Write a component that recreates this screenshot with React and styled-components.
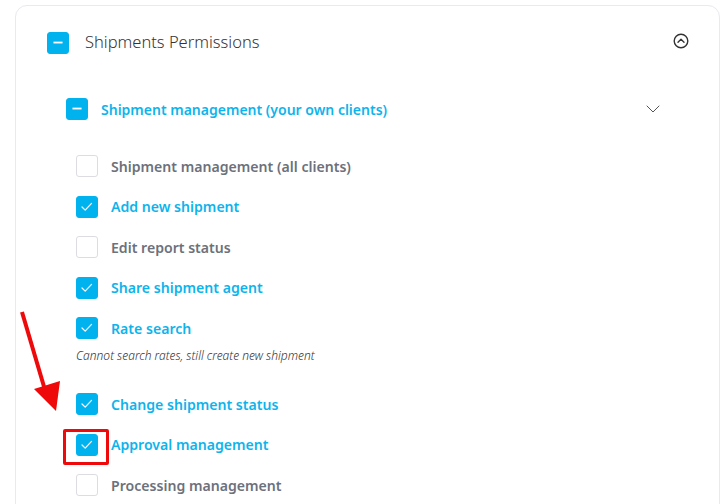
import styled, { createGlobalStyle } from 'styled-components';

const GlobalStyle = createGlobalStyle`
  html, body {
    margin: 0;
    padding: 0;
    background: #ffffff;
    font-family: "Noto Sans", "Open Sans", sans-serif;
  }
  body {
    overflow: hidden;
  }
`;

const Page = styled.div`
  position: relative;
  height: 504px;
  padding: 5px 4px 0 15px;
  box-sizing: border-box;
  overflow: hidden;
`;

const Card = styled.div`
  border: 1px solid #e9e9ef;
  border-radius: 12px;
  padding: 27px 31px 40px 31px;
  min-height: 600px;
  box-sizing: border-box;
`;

const HeaderRow = styled.div`
  display: flex;
  align-items: center;
  height: 22px;
  margin-top: ${(p) => p.$top || 0}px;
`;

const HeaderTitle = styled.div`
  flex: 1;
  margin-left: 16px;
  margin-top: -2px;
  font-size: 16.5px;
  font-weight: 300;
  color: #333338;
  line-height: 22px;
`;

const IconSlot = styled.div`
  display: flex;
  align-items: center;
  justify-content: center;
  width: 16px;
  height: 16px;
  margin-right: ${(p) => p.$right || 0}px;
  margin-top: ${(p) => p.$top || 0}px;
`;

const Section = styled.div`
  margin-top: 44px;
  padding-left: 19px;
`;

const SubTitle = styled.div`
  flex: 1;
  margin-left: 13px;
  font-size: 14px;
  font-weight: 600;
  color: #0db4ec;
`;

const ItemList = styled.div`
  display: flex;
  flex-direction: column;
  gap: 18.5px;
  margin-top: 35px;
  padding-left: 10px;
`;

const ItemRow = styled.div`
  display: flex;
  align-items: center;
  height: 22px;
`;

const Label = styled.div`
  margin-left: 13px;
  font-size: 14.1px;
  font-weight: 600;
  color: ${(p) => (p.$checked ? '#0db4ec' : '#6c717c')};
`;

const Note = styled.div`
  margin-top: -10px;
  margin-bottom: 11.3px;
  font-size: 12px;
  font-style: italic;
  font-weight: 300;
  color: #333338;
  line-height: 16px;
`;

const Box = styled.div`
  position: relative;
  flex: none;
  width: 22px;
  height: 22px;
  box-sizing: border-box;
  border-radius: 3px;
  border: 1px solid ${(p) => (p.$checked ? '#00b3ef' : '#dcdce2')};
  background: ${(p) => (p.$checked ? '#00b3ef' : '#ffffff')};
  display: flex;
  align-items: center;
  justify-content: center;
`;

const Highlight = styled.div`
  position: absolute;
  left: -14px;
  top: -6px;
  width: 46px;
  height: 36px;
  box-sizing: border-box;
  border: 3px solid #ee0a0a;
  border-radius: 2px;
`;

const Arrow = styled.svg`
  position: absolute;
  left: 0;
  top: 0;
  pointer-events: none;
`;

const Minus = () => (
  <svg width="22" height="22" viewBox="0 0 22 22">
    <line x1="6" y1="10.5" x2="16" y2="10.5" stroke="#fff" strokeWidth="2" />
  </svg>
);

const Check = () => (
  <svg width="22" height="22" viewBox="0 0 22 22">
    <polyline
      points="5.5,11 9,14.5 16,7"
      fill="none"
      stroke="#fff"
      strokeWidth="1.3"
      strokeLinecap="round"
      strokeLinejoin="round"
    />
  </svg>
);

const Checkbox = ({ checked, partial, marked }) => (
  <Box $checked={checked || partial}>
    {partial ? <Minus /> : checked ? <Check /> : null}
    {marked && <Highlight />}
  </Box>
);

const ChevronCircleUp = () => (
  <svg width="16" height="16" viewBox="0 0 16 16">
    <circle cx="8" cy="8" r="6.8" fill="none" stroke="#333" strokeWidth="1.4" />
    <polyline
      points="5,9.3 8,6.3 11,9.3"
      fill="none"
      stroke="#333"
      strokeWidth="1.4"
      strokeLinecap="round"
      strokeLinejoin="round"
    />
  </svg>
);

const ChevronDown = () => (
  <svg width="14" height="8" viewBox="0 0 14 8">
    <polyline
      points="1,1 7,7 13,1"
      fill="none"
      stroke="#555"
      strokeWidth="1"
      strokeLinecap="round"
      strokeLinejoin="round"
    />
  </svg>
);

const items = [
  { label: 'Shipment management (all clients)', checked: false },
  { label: 'Add new shipment', checked: true },
  { label: 'Edit report status', checked: false },
  { label: 'Share shipment agent', checked: true },
  { label: 'Rate search', checked: true, note: 'Cannot search rates, still create new shipment' },
  { label: 'Change shipment status', checked: true },
  { label: 'Approval management', checked: true, marked: true },
  { label: 'Processing management', checked: false },
];

const App = () => (
  <>
    <GlobalStyle />
    <Page>
      <Card>
        <HeaderRow $top={-1}>
          <Checkbox partial />
          <HeaderTitle>Shipments Permissions</HeaderTitle>
          <IconSlot $right={-1} $top={-4}>
            <ChevronCircleUp />
          </IconSlot>
        </HeaderRow>
        <Section>
          <HeaderRow $top={1}>
            <Checkbox partial />
            <SubTitle>Shipment management (your own clients)</SubTitle>
            <IconSlot $right={27} $top={-1}>
              <ChevronDown />
            </IconSlot>
          </HeaderRow>
          <ItemList>
            {items.map((item) => (
              <>
                <ItemRow key={item.label}>
                  <Checkbox checked={item.checked} marked={item.marked} />
                  <Label $checked={item.checked}>{item.label}</Label>
                </ItemRow>
                {item.note && <Note key={item.note}>{item.note}</Note>}
              </>
            ))}
          </ItemList>
        </Section>
      </Card>
      <Arrow width="80" height="430" viewBox="0 0 80 430">
        <line x1="22" y1="312" x2="45" y2="390" stroke="#ee0a0a" strokeWidth="4" />
        <polygon points="34,389 60,381 56,411" fill="#ee0a0a" />
      </Arrow>
    </Page>
  </>
);

export default App;
